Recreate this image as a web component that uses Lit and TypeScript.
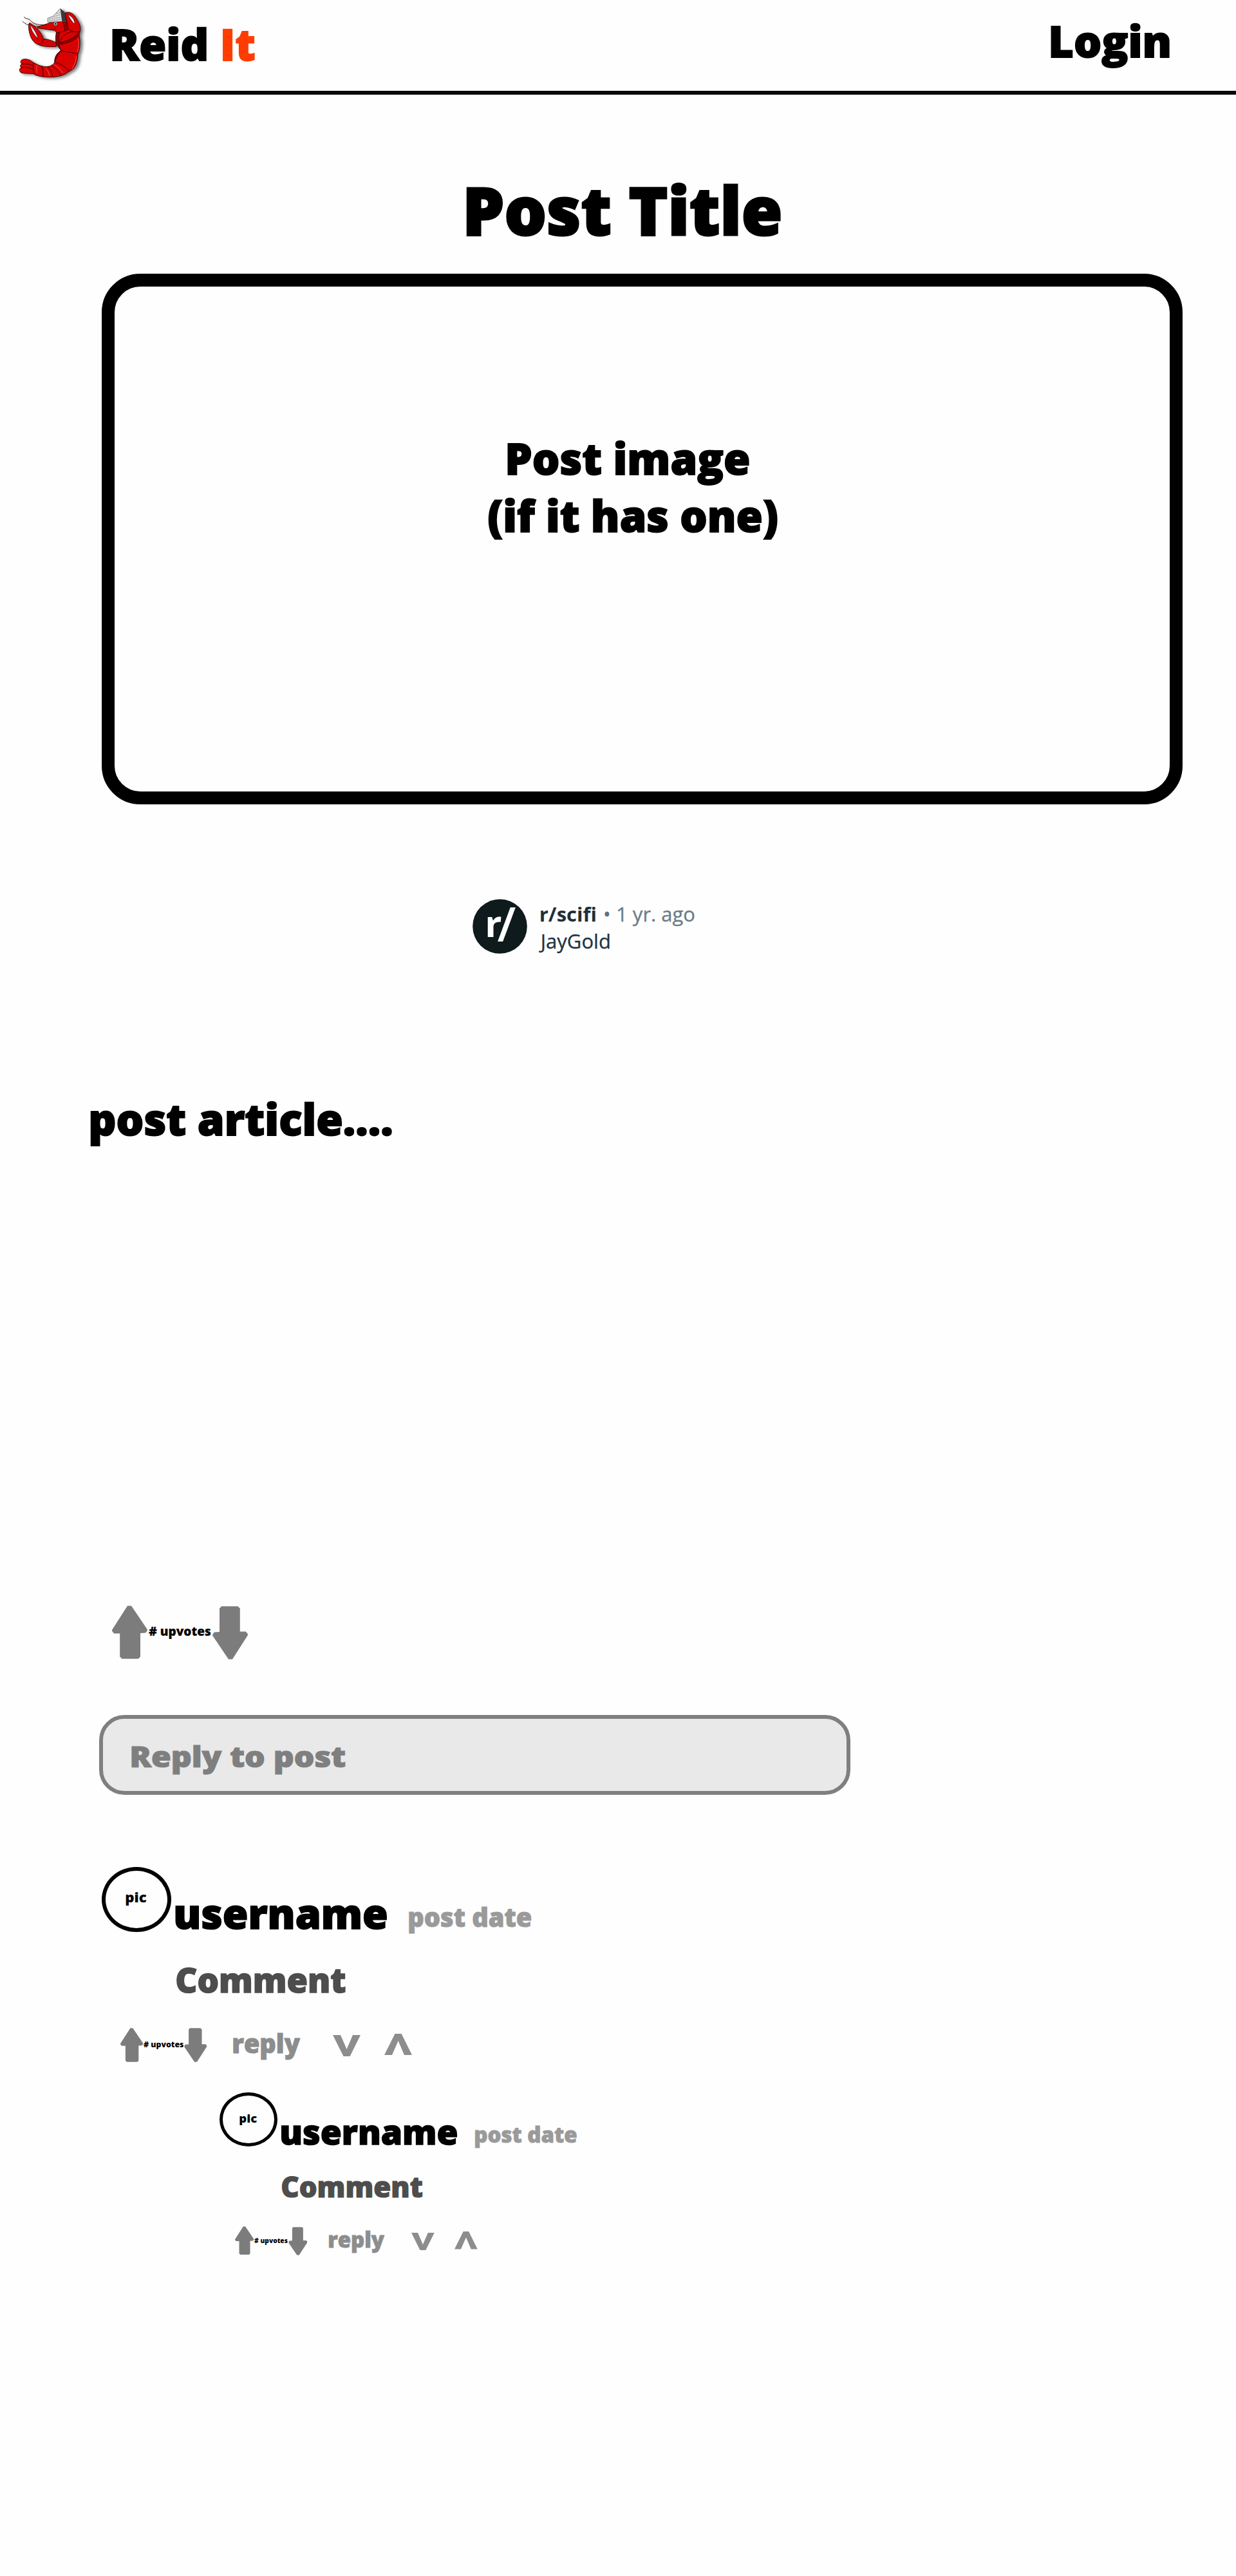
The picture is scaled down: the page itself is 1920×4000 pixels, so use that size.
import { LitElement, html, css } from "lit";
import { customElement, property } from "lit/decorators.js";

const textStyles = css`
  .t {
    display: block;
    flex: none;
    line-height: 1;
    white-space: pre;
    translate: 0.3px 1px;
    transform-origin: 0 0;
    font-family: "Open Sans", "Noto Sans", sans-serif;
    font-weight: 800;
    -webkit-text-stroke: 0.028em currentColor;
  }
  svg {
    display: block;
    flex: none;
  }
`;

@customElement("shrimp-logo")
class ShrimpLogo extends LitElement {
  static styles = css`
    :host {
      display: block;
      flex: none;
      width: 103.3px;
      height: 110px;
    }
    svg {
      display: block;
      overflow: visible;
      filter: drop-shadow(4px 2px 2px rgba(0, 0, 0, 0.5));
    }
    .red {
      fill: #d90202;
      stroke: #2a0000;
      stroke-width: 2.6;
      stroke-linejoin: round;
    }
    .dark {
      fill: #960000;
      stroke: #2a0000;
      stroke-width: 2;
    }
    .line {
      fill: none;
      stroke: #2a0000;
      stroke-width: 2.6;
      stroke-linecap: round;
    }
    .shine {
      fill: none;
      stroke: #f26a6a;
      stroke-width: 2.5;
      stroke-linecap: round;
    }
    .slit {
      fill: #f4e9e9;
      stroke: #2a0000;
      stroke-width: 2.2;
    }
    .paper {
      fill: #dcdcdc;
      stroke: #444;
      stroke-width: 2;
    }
    .shade {
      fill: #3a3a3a;
    }
    .print {
      fill: none;
      stroke: #8a8a8a;
      stroke-width: 3;
      stroke-dasharray: 7 4;
    }
  `;
  render() {
    return html`<svg width="103.3" height="110" viewBox="80 35 310 330">
      <path class="line" d="M112 78C114 90 130 80 142 96C156 114 190 117 212 114M104 99C116 107 124 116 136 115C158 124 180 122 200 118" />
      <path class="red" d="M262 150C258 168 258 190 262 205L285 235C262 245 252 270 254 289C245 302 235 307 222 309C208 312 192 307 180 303L155 291C150 310 153 332 160 347C180 355 215 360 245 358C272 356 300 350 320 332C346 322 360 300 362 250C372 232 375 190 368 163L372 145L318 130Z" />
      <path class="red" d="M155 291C136 272 106 270 98 280C93 288 96 294 101 297C92 301 92 309 98 314C88 318 87 330 97 338C115 343 140 340 158 343C154 325 152 308 155 291Z" />
      <path class="line" d="M101 297C118 294 138 298 154 305M98 314C118 311 138 314 154 323" />
      <path class="line" d="M193 306C200 320 202 340 199 356M222 309C235 320 243 340 245 357M238 303C260 318 275 335 283 352M254 289C280 295 305 310 320 332M280 235C310 240 340 245 363 250" />
      <path class="shine" d="M364 180C368 205 366 225 360 240M354 262C354 285 348 302 336 316M171 303C168 315 169 328 172 338M212 318C222 326 228 338 229 350M250 300C268 310 282 322 292 338" />
      <path class="dark" d="M262 150C258 168 258 190 262 205L284 234C276 220 274 208 274 196C272 180 274 165 276 150Z" />
      <path class="dark" d="M285 235C262 245 252 270 254 289C262 270 268 252 285 235Z" />
      <path class="dark" d="M276 206C310 202 352 190 368 160L340 166L276 196Z" />
      <path class="red" d="M274 199C284 172 308 150 335 146L366 147C360 166 330 186 274 199Z" />
      <path class="red" d="M182 208C192 216 232 217 262 216L260 197C240 187 215 180 200 180Z" />
      <path class="red" d="M137 105C128 115 134 150 142 170C150 190 165 205 182 208C195 202 201 188 200 175C194 155 172 126 137 105Z" />
      <path class="slit" d="M139 114C144 142 160 164 176 179C172 158 158 134 139 114Z" />
      <path class="red" d="M173 125L245 101L300 98L318 133C302 145 280 150 264 151C255 138 240 138 220 136L173 130Z" />
      <path class="dark" d="M292 99L308 96L318 134L302 142Z" />
      <path class="line" d="M232 137C246 140 256 136 258 128M205 116L213 114" />
      <path class="paper" d="M221 84L246 75L280 39L306 62L311 98L222 103Z" />
      <path class="print" d="M250 76L284 66M228 88L284 80M228 96L284 90M262 62L284 56" />
      <path class="shade" d="M280 39L306 60L312 99L288 99Z" />
      <path class="red" d="M305 58C325 50 345 65 355 85C370 105 378 130 372 145C350 150 330 145 316 133C314 100 302 82 305 58Z" />
      <path class="slit" d="M313 66C336 74 350 96 347 110C336 106 326 84 313 66Z" />
      <circle cx="258" cy="110" r="8.5" fill="#fff" stroke="#111" stroke-width="2" />
      <circle cx="258" cy="110" r="4.5" fill="#111" />
    </svg>`;
  }
}

@customElement("vote-arrow")
class VoteArrow extends LitElement {
  @property({ type: Boolean }) down = false;
  static styles = css`
    :host {
      display: block;
      flex: none;
    }
    svg {
      display: block;
      width: 100%;
      height: 100%;
      fill: #7c7c7c;
    }
    .down {
      transform: rotate(180deg);
    }
  `;
  render() {
    return html`<svg class=${this.down ? "down" : "up"} viewBox="0 0 55 83" preserveAspectRatio="none">
      <path d="M24 0.5L30 0.5L55 37.5Q55 40 52 42.5L44 43L44 79.5L41 82.7L15.5 82.7L12.2 79.5L12.2 43.5L3 43.5L0 39.5L0 38Z" />
    </svg>`;
  }
}

@customElement("post-comment")
class PostComment extends LitElement {
  static styles = [
    textStyles,
    css`
      :host {
        display: block;
      }
      .head {
        display: flex;
        align-items: flex-start;
        height: 101px;
      }
      .avatar {
        box-sizing: border-box;
        flex: none;
        width: 108px;
        height: 101px;
        border: 6.6px solid #000;
        border-radius: 50%;
        padding: 30.5px 0 0 30.2px;
      }
      .pic {
        font-size: 21px;
        -webkit-text-stroke-width: 0;
        transform: scaleX(1.06);
      }
      .user {
        font-size: 64px;
        margin: 39.8px 0 0 3.5px;
        transform: scaleX(1.005);
      }
      .date {
        font-size: 40.5px;
        margin: 57.8px 0 0 31.5px;
        color: #9a9a9a;
        transform: scaleX(0.98);
      }
      .body {
        font-size: 53.5px;
        margin: 46.6px 0 0 114.4px;
        color: #4d4d4d;
        transform: scaleX(0.985);
      }
      .actions {
        display: flex;
        align-items: flex-start;
        height: 54px;
        margin: 49px 0 0 29.4px;
      }
      vote-arrow {
        width: 35.4px;
        height: 53px;
      }
      .dn {
        margin: 0.7px 0 0 1px;
      }
      .count {
        font-size: 12.3px;
        margin-top: 19px;
        -webkit-text-stroke-width: 0;
      }
      .reply {
        font-size: 40px;
        margin: 3.8px 0 0 38.6px;
        color: #8d8d8d;
        transform: scaleX(0.99);
      }
      .v {
        margin: 11.7px 0 0 50px;
      }
      .w {
        margin: 9.7px 0 0 37px;
      }
      .chev {
        fill: #8d8d8d;
      }
    `,
  ];
  render() {
    return html`
      <div class="head">
        <div class="avatar"><span class="t pic">pic</span></div>
        <span class="t user">username</span>
        <span class="t date">post date</span>
      </div>
      <span class="t body">Comment</span>
      <div class="actions">
        <vote-arrow></vote-arrow>
        <span class="t count"># upvotes</span>
        <vote-arrow class="dn" down></vote-arrow>
        <span class="t reply">reply</span>
        <svg class="chev v" width="43" height="33" viewBox="0 0 43 33"><path d="M0 0H12L21.6 22L31 0H43L26.6 33H16.5Z" /></svg>
        <svg class="chev w" width="43" height="33" viewBox="0 0 43 33"><path d="M0 33H12L21.6 11L31 33H43L26.6 0H16.5Z" /></svg>
      </div>
    `;
  }
}

@customElement("app-root")
class AppRoot extends LitElement {
  static styles = [
    textStyles,
    css`
      :host {
        display: block;
        min-height: 4000px;
        background: #fefefe;
        color: #000;
      }
      header {
        box-sizing: border-box;
        display: flex;
        align-items: flex-start;
        height: 147px;
        padding: 11.7px 100.2px 0 26.7px;
        border-bottom: 6px solid #080808;
      }
      .brand {
        font-size: 68px;
        margin: 21.4px 0 0 40px;
      }
      .accent {
        color: #ff3d00;
        -webkit-text-stroke-color: #ff3d00;
      }
      .login {
        font-size: 68px;
        margin: 15.9px 0 0 auto;
      }
      main {
        display: flex;
        flex-direction: column;
        align-items: flex-start;
      }
      .title {
        font-size: 103.5px;
        margin: 125px 0 0 717.5px;
        transform: scaleX(0.996);
      }
      .image {
        box-sizing: border-box;
        width: 1679px;
        height: 824px;
        margin: 49.5px 0 0 158px;
        border: 20px solid #000;
        border-radius: 60px;
        padding-top: 230.6px;
      }
      .line1,
      .line2,
      .article {
        font-size: 68px;
      }
      .line1 {
        margin-left: 605.5px;
        transform: scaleX(0.987);
      }
      .line2 {
        margin: 21px 0 0 579.2px;
        transform: scaleX(0.983);
      }
      .meta {
        display: flex;
        align-items: flex-start;
        height: 85px;
        margin: 147px 0 0 733.7px;
      }
      .badge {
        font-family: "Open Sans", sans-serif;
        font-weight: 700;
        fill: #fff;
      }
      .slash {
        font-weight: 600;
      }
      .who {
        margin: 7.2px 0 0 18.8px;
      }
      .row {
        display: flex;
      }
      .s {
        font-size: 31px;
        font-weight: 400;
        -webkit-text-stroke-width: 0.3px;
        color: #1d3340;
      }
      .sub {
        font-weight: 700;
        -webkit-text-stroke-width: 0;
        color: #1f3038;
      }
      .dot {
        margin-left: 10px;
        color: #5b7280;
      }
      .ago {
        margin-left: 8.5px;
        color: #6a7c88;
      }
      .author {
        margin: 11px 0 0 2px;
      }
      .article {
        margin: 220.9px 0 0 137.4px;
        transform: scaleX(0.99);
      }
      .votes {
        display: flex;
        align-items: flex-start;
        height: 84px;
        margin: 723.4px 0 0 174.3px;
      }
      .votes vote-arrow {
        width: 55px;
        height: 83px;
      }
      .votes .dn {
        margin: 1px 0 0 2.4px;
      }
      .count {
        font-size: 19px;
        margin: 29.5px 0 0 1.7px;
        -webkit-text-stroke-width: 0.2px;
      }
      .replybox {
        box-sizing: border-box;
        width: 1167px;
        height: 124px;
        margin: 85.6px 0 0 154px;
        padding: 36.5px 0 0 41px;
        border: 6.6px solid #7f7f7f;
        border-radius: 39px;
        background: #e9e9e9;
      }
      .ph {
        font-size: 43.6px;
        color: #7f7f7f;
        transform: scaleX(1.142);
      }
      .c1 {
        margin: 111.7px 0 0 157.9px;
      }
      .c2 {
        zoom: 0.8316;
        margin: 56px 0 0 410px;
      }
    `,
  ];
  render() {
    return html`
      <header>
        <shrimp-logo></shrimp-logo>
        <span class="t brand">Reid <span class="accent">It</span></span>
        <span class="t login">Login</span>
      </header>
      <main>
        <span class="t title">Post Title</span>
        <div class="image">
          <span class="t line1">Post image</span>
          <span class="t line2">(if it has one)</span>
        </div>
        <div class="meta">
          <svg class="badge" width="85" height="85" viewBox="0 0 85 85">
            <circle cx="42.5" cy="42.5" r="42.3" fill="#0f1a1c" />
            <text x="19.2" y="58.5" font-size="58">r</text>
            <text class="slash" x="38.5" y="66" font-size="74">/</text>
          </svg>
          <div class="who">
            <div class="row">
              <span class="t s sub">r/scifi</span>
              <span class="t s dot">•</span>
              <span class="t s ago">1 yr. ago</span>
            </div>
            <span class="t s author">JayGold</span>
          </div>
        </div>
        <span class="t article">post article....</span>
        <div class="votes">
          <vote-arrow></vote-arrow>
          <span class="t count"># upvotes</span>
          <vote-arrow class="dn" down></vote-arrow>
        </div>
        <div class="replybox"><span class="t ph">Reply to post</span></div>
        <post-comment class="c1"></post-comment>
        <post-comment class="c2"></post-comment>
      </main>
    `;
  }
}
